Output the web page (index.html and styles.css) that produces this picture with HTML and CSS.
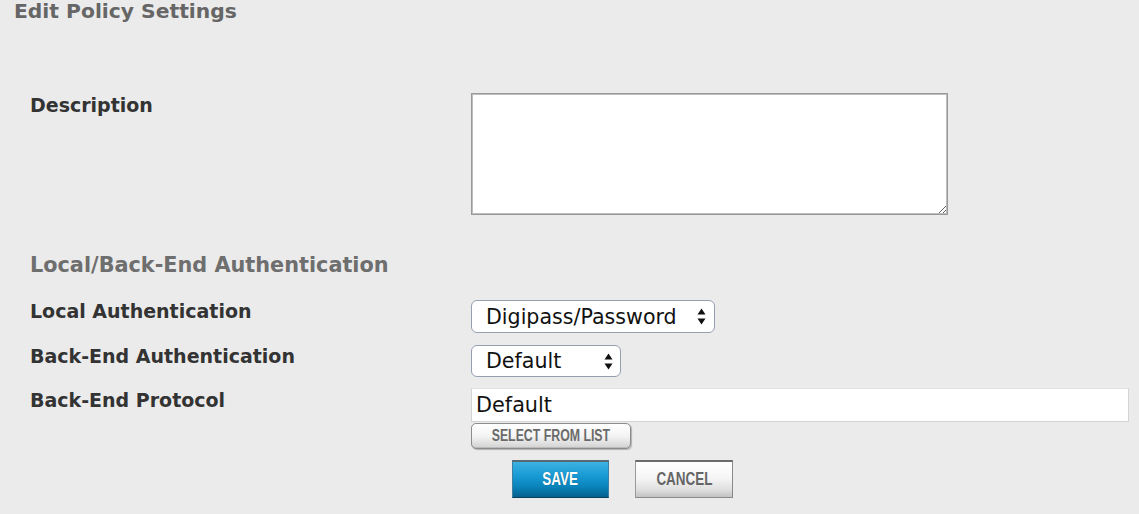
FILE: index.html
```html
<!DOCTYPE html>
<html lang="en">
<head>
<meta charset="utf-8">
<title>Edit Policy Settings</title>
<link rel="stylesheet" href="styles.css">
</head>
<body>
<div class="page">
  <h1 class="title">Edit Policy Settings</h1>

  <div class="row row-desc">
    <label class="label" for="desc">Description</label>
    <div class="control">
      <textarea id="desc" class="textarea"></textarea>
    </div>
  </div>

  <h2 class="section">Local/Back-End Authentication</h2>

  <div class="row row-local">
    <label class="label" for="local">Local Authentication</label>
    <div class="control">
      <span class="select-wrap select-wide">
        <select id="local" class="select"><option>Digipass/Password</option></select>
        <svg class="arrows" width="9" height="17" viewBox="0 0 9 17"><path d="M4.5 0.5 L8.5 6.5 L0.5 6.5 Z M4.5 16.5 L8.5 10.5 L0.5 10.5 Z" fill="#111"/></svg>
      </span>
    </div>
  </div>

  <div class="row row-backend">
    <label class="label" for="backend">Back-End Authentication</label>
    <div class="control">
      <span class="select-wrap select-narrow">
        <select id="backend" class="select"><option>Default</option></select>
        <svg class="arrows" width="9" height="17" viewBox="0 0 9 17"><path d="M4.5 0.5 L8.5 6.5 L0.5 6.5 Z M4.5 16.5 L8.5 10.5 L0.5 10.5 Z" fill="#111"/></svg>
      </span>
    </div>
  </div>

  <div class="row row-protocol">
    <label class="label" for="protocol">Back-End Protocol</label>
    <div class="control">
      <input id="protocol" class="input" type="text" value="Default">
      <button class="btn-list" type="button"><span class="squeeze">SELECT FROM LIST</span></button>
      <div class="actions">
        <button class="btn btn-save" type="button"><span class="squeeze">SAVE</span></button>
        <button class="btn btn-cancel" type="button"><span class="squeeze">CANCEL</span></button>
      </div>
    </div>
  </div>
</div>
</body>
</html>
```

FILE: styles.css
```css
* { box-sizing: border-box; }

html, body {
  margin: 0;
  padding: 0;
  background: #ebebeb;
}

body {
  font-family: "DejaVu Sans", Verdana, sans-serif;
  color: #333;
}

.page {
  padding: 0 9px 0 14px;
}

.title {
  margin: 0;
  font-size: 20.3px;
  line-height: 22px;
  font-weight: bold;
  color: #666;
}

.row {
  display: grid;
  grid-template-columns: 441px 1fr;
  padding-left: 16px;
  align-items: start;
}

.label {
  font-size: 19px;
  line-height: 22px;
  font-weight: bold;
  color: #333;
}

.row-desc { margin-top: 71px; }
.row-local { margin-top: 24px; }
.row-backend { margin-top: 12px; }
.row-protocol { margin-top: 11px; }

.row-desc .label { padding-top: 1px; }
.row-protocol .label { padding-top: 1px; }

.control {
  display: flex;
  flex-direction: column;
  align-items: flex-start;
}

.textarea {
  display: block;
  width: 477px;
  height: 122px;
  margin: 0;
  border: 1px solid #999;
  box-shadow: inset 0 0 0 1px #bdbdbd;
  background: #fff;
  resize: both;
  font-family: "DejaVu Sans", sans-serif;
}

.section {
  margin: 39px 0 0 16px;
  font-size: 20.8px;
  line-height: 22px;
  font-weight: bold;
  color: #6e6e6e;
}

.select-wrap {
  position: relative;
  display: inline-block;
}

.select {
  -webkit-appearance: none;
  appearance: none;
  display: block;
  margin: 0;
  background: #fff;
  border: 1px solid #94a0b0;
  border-radius: 6px;
  font-family: "DejaVu Sans", Verdana, sans-serif;
  font-size: 20.6px;
  color: #111;
  padding: 0 0 0 14px;
}

.select-wide .select { width: 244px; height: 33px; }
.select-narrow .select { width: 150px; height: 32px; }

.arrows {
  position: absolute;
  top: 8px;
  right: 9px;
  pointer-events: none;
}
.select-narrow .arrows { right: 8px; top: 8px; }

.input {
  display: block;
  width: 658px;
  height: 34px;
  margin: 0;
  background: #fff;
  border: 1px solid #d4d4d4;
  border-top-color: #e2e2e2;
  font-family: "DejaVu Sans", Verdana, sans-serif;
  font-size: 20.8px;
  color: #111;
  padding: 0 0 0 4px;
}

.squeeze {
  display: inline-block;
  transform: scaleX(0.77);
  transform-origin: center;
  white-space: nowrap;
}

.btn-list {
  margin: 1px 0 0 0;
  width: 160px;
  height: 26px;
  border: 1px solid #8c8c8c;
  border-radius: 5px;
  background: linear-gradient(#ffffff 0%, #f4f4f4 50%, #d2d2d2 100%);
  box-shadow: inset 0 -1px 0 #bbb, 1px 1px 1px rgba(0,0,0,0.25);
  font-family: "Liberation Sans", Arial, sans-serif;
  font-weight: bold;
  font-size: 16px;
  line-height: 24px;
  color: #6a6a6a;
  padding: 0;
  display: flex;
  justify-content: center;
  align-items: center;
  overflow: hidden;
}

.actions {
  display: flex;
  gap: 26px;
  margin: 11px 0 0 41px;
}

.btn {
  width: 97px;
  height: 38px;
  padding: 0;
  font-family: "Liberation Sans", Arial, sans-serif;
  font-weight: bold;
  font-size: 17.5px;
  display: flex;
  justify-content: center;
  align-items: center;
  overflow: hidden;
}

.btn-save {
  border: none;
  border-top: 2px solid #5a6a72;
  border-left: 1px solid #3e7fa0;
  border-right: 1px solid #3e7fa0;
  border-bottom: 1px solid #06405e;
  background: linear-gradient(#3db2e2 0%, #179ad4 40%, #0a84bb 70%, #06618e 100%);
  color: #fff;
  text-shadow: 0 0 1px rgba(0,0,0,0.4);
}

.btn-cancel {
  width: 98px;
  border: none;
  border-top: 2px solid #6c6c6c;
  border-left: 1px solid #9a9a9a;
  border-right: 1px solid #8a8a8a;
  border-bottom: 1px solid #8a8a8a;
  background: linear-gradient(#ffffff 0%, #f6f6f6 45%, #dedede 80%, #c2c2c2 100%);
  color: #666;
}
```
